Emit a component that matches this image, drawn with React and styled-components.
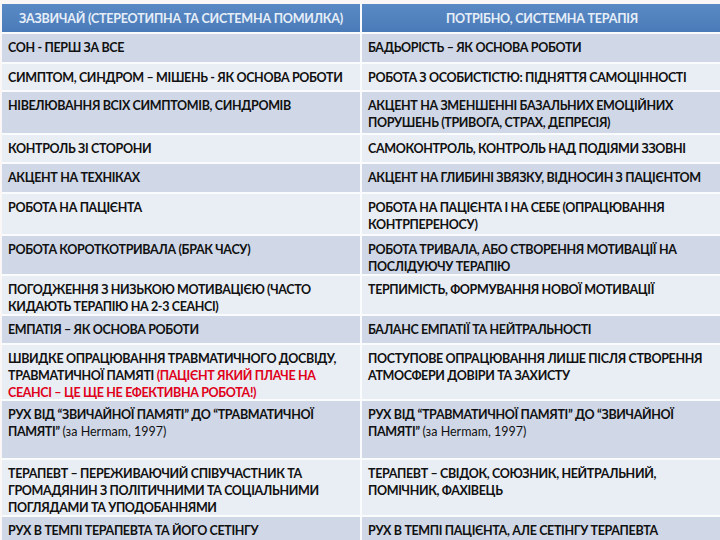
import React from 'react'
import styled, { createGlobalStyle } from 'styled-components'

const GlobalStyle = createGlobalStyle`
  html, body {
    margin: 0;
    padding: 0;
    background: #fbf7f6;
  }
  body {
    font-family: Lato, "Liberation Sans", sans-serif;
  }
`

const Page = styled.div`
  width: 720px;
  height: 540px;
  overflow: hidden;
  padding: 4px 0 0 2px;
  box-sizing: border-box;
`

const Table = styled.div`
  display: flex;
  flex-direction: column;
  gap: 2px;
  background: #fafbfd;
`

const Row = styled.div`
  display: grid;
  grid-template-columns: 358px 360px;
  column-gap: 2px;
  height: ${props => props.h}px;
`

const HeadCell = styled.div`
  display: flex;
  align-items: center;
  justify-content: center;
  padding-right: ${props => (props.shift ? props.shift : 0)}px;
  background: linear-gradient(#5a8ac5, #4a7bb8);
  color: #e6eef8;
  font-size: 12.5px;
  font-weight: 700;
  letter-spacing: -0.2px;
  white-space: nowrap;
`

const Cell = styled.div`
  background: ${props => (props.dark ? '#d0d8e8' : '#e9edf4')};
  color: #111;
  font-size: 12.5px;
  font-weight: 700;
  line-height: 17px;
  letter-spacing: -0.35px;
  padding: 5px 0 0 6px;
  white-space: nowrap;
  overflow: hidden;
`

const Line = styled.div``

const Red = styled.span`
  color: #e0001a;
`

const Note = styled.span`
  font-weight: 400;
  letter-spacing: 0;
`

const rows = [
  { h: 28, left: ['СОН - ПЕРШ ЗА ВСЕ'], right: ['БАДЬОРІСТЬ – ЯК ОСНОВА РОБОТИ'] },
  { h: 26, left: ['СИМПТОМ, СИНДРОМ – МІШЕНЬ - ЯК ОСНОВА РОБОТИ'], right: ['РОБОТА З ОСОБИСТІСТЮ: ПІДНЯТТЯ САМОЦІННОСТІ'] },
  {
    h: 41,
    left: ['НІВЕЛЮВАННЯ ВСІХ СИМПТОМІВ, СИНДРОМІВ'],
    right: ['АКЦЕНТ НА ЗМЕНШЕННІ БАЗАЛЬНИХ ЕМОЦІЙНИХ', 'ПОРУШЕНЬ (ТРИВОГА, СТРАХ, ДЕПРЕСІЯ)'],
  },
  { h: 27, left: ['КОНТРОЛЬ ЗІ СТОРОНИ'], right: ['САМОКОНТРОЛЬ, КОНТРОЛЬ НАД ПОДІЯМИ ЗЗОВНІ'] },
  { h: 28, left: ['АКЦЕНТ НА ТЕХНІКАХ'], right: ['АКЦЕНТ НА ГЛИБИНІ ЗВЯЗКУ, ВІДНОСИН З ПАЦІЄНТОМ'] },
  {
    h: 40,
    left: ['РОБОТА НА ПАЦІЄНТА'],
    right: ['РОБОТА НА ПАЦІЄНТА І НА СЕБЕ (ОПРАЦЮВАННЯ', 'КОНТРПЕРЕНОСУ)'],
  },
  {
    h: 38,
    left: ['РОБОТА КОРОТКОТРИВАЛА (БРАК ЧАСУ)'],
    right: ['РОБОТА ТРИВАЛА, АБО СТВОРЕННЯ МОТИВАЦІЇ НА', 'ПОСЛІДУЮЧУ ТЕРАПІЮ'],
  },
  {
    h: 38,
    left: ['ПОГОДЖЕННЯ З НИЗЬКОЮ МОТИВАЦІЄЮ (ЧАСТО', 'КИДАЮТЬ ТЕРАПІЮ НА 2-3 СЕАНСІ)'],
    right: ['ТЕРПИМІСТЬ, ФОРМУВАННЯ НОВОЇ МОТИВАЦІЇ'],
  },
  { h: 27, left: ['ЕМПАТІЯ – ЯК ОСНОВА РОБОТИ'], right: ['БАЛАНС ЕМПАТІЇ ТА НЕЙТРАЛЬНОСТІ'] },
  {
    h: 54,
    left: [
      'ШВИДКЕ ОПРАЦЮВАННЯ ТРАВМАТИЧНОГО ДОСВІДУ,',
      <>ТРАВМАТИЧНОЇ ПАМЯТІ <Red>(ПАЦІЄНТ ЯКИЙ ПЛАЧЕ НА</Red></>,
      <Red>СЕАНСІ – ЦЕ ЩЕ НЕ ЕФЕКТИВНА РОБОТА!)</Red>,
    ],
    right: ['ПОСТУПОВЕ ОПРАЦЮВАННЯ ЛИШЕ ПІСЛЯ СТВОРЕННЯ', 'АТМОСФЕРИ ДОВІРИ ТА ЗАХИСТУ'],
  },
  {
    h: 57,
    left: ['РУХ ВІД “ЗВИЧАЙНОЇ ПАМЯТІ” ДО “ТРАВМАТИЧНОЇ', <>ПАМЯТІ” <Note>(за Hermam, 1997)</Note></>],
    right: ['РУХ ВІД “ТРАВМАТИЧНОЇ ПАМЯТІ” ДО “ЗВИЧАЙНОЇ', <>ПАМЯТІ” <Note>(за Hermam, 1997)</Note></>],
  },
  {
    h: 55,
    left: [
      'ТЕРАПЕВТ – ПЕРЕЖИВАЮЧИЙ СПІВУЧАСТНИК ТА',
      'ГРОМАДЯНИН З ПОЛІТИЧНИМИ ТА СОЦІАЛЬНИМИ',
      'ПОГЛЯДАМИ ТА УПОДОБАННЯМИ',
    ],
    right: ['ТЕРАПЕВТ – СВІДОК, СОЮЗНИК, НЕЙТРАЛЬНИЙ,', 'ПОМІЧНИК, ФАХІВЕЦЬ'],
  },
  { h: 30, left: ['РУХ В ТЕМПІ ТЕРАПЕВТА ТА ЙОГО СЕТІНГУ'], right: ['РУХ В ТЕМПІ ПАЦІЄНТА, АЛЕ СЕТІНГУ ТЕРАПЕВТА'] },
]

const Lines = ({ items }) => items.map((item, i) => <Line key={i}>{item}</Line>)

export default function App() {
  return (
    <>
      <GlobalStyle />
      <Page>
        <Table>
          <Row h={28}>
            <HeadCell>ЗАЗВИЧАЙ (СТЕРЕОТИПНА ТА СИСТЕМНА ПОМИЛКА)</HeadCell>
            <HeadCell>ПОТРІБНО, СИСТЕМНА ТЕРАПІЯ</HeadCell>
          </Row>
          {rows.map((row, i) => (
            <Row key={i} h={row.h}>
              <Cell dark={i % 2 === 0}>
                <Lines items={row.left} />
              </Cell>
              <Cell dark={i % 2 === 0}>
                <Lines items={row.right} />
              </Cell>
            </Row>
          ))}
        </Table>
      </Page>
    </>
  )
}
